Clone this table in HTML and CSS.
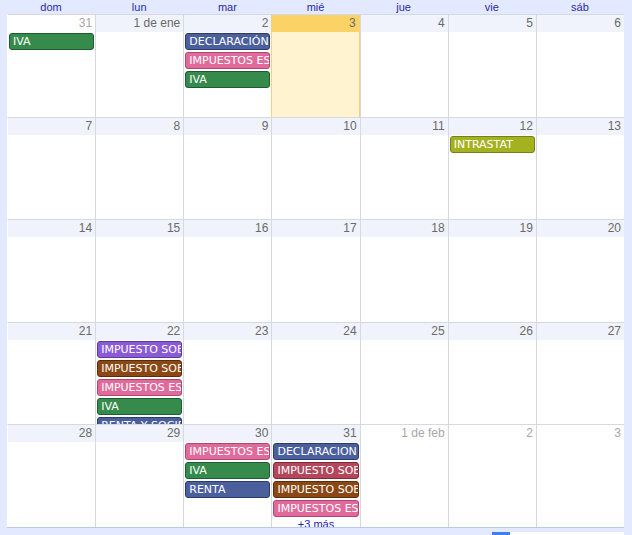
FILE: index.html
```html
<!DOCTYPE html>
<html lang="es">
<head>
<meta charset="utf-8">
<title>Calendario</title>
<link rel="stylesheet" href="styles.css">
</head>
<body>
<div class="cal">
  <div class="days">
    <div>dom</div><div>lun</div><div>mar</div><div>mié</div><div>jue</div><div>vie</div><div>sáb</div>
  </div>
  <div class="month">
    <!-- week 1 -->
    <div class="cell other-head"><div class="num other">31</div><div class="ev green">IVA</div></div>
    <div class="cell"><div class="num">1 de ene</div></div>
    <div class="cell"><div class="num">2</div>
      <div class="ev blue">DECLARACIÓN ANUAL</div>
      <div class="ev pink">IMPUESTOS ESPECIALES</div>
      <div class="ev green">IVA</div>
    </div>
    <div class="cell today"><div class="num">3</div></div>
    <div class="cell"><div class="num">4</div></div>
    <div class="cell"><div class="num">5</div></div>
    <div class="cell"><div class="num">6</div></div>
    <!-- week 2 -->
    <div class="cell"><div class="num">7</div></div>
    <div class="cell"><div class="num">8</div></div>
    <div class="cell"><div class="num">9</div></div>
    <div class="cell"><div class="num">10</div></div>
    <div class="cell"><div class="num">11</div></div>
    <div class="cell"><div class="num">12</div><div class="ev olive">INTRASTAT</div></div>
    <div class="cell"><div class="num">13</div></div>
    <!-- week 3 -->
    <div class="cell"><div class="num">14</div></div>
    <div class="cell"><div class="num">15</div></div>
    <div class="cell"><div class="num">16</div></div>
    <div class="cell"><div class="num">17</div></div>
    <div class="cell"><div class="num">18</div></div>
    <div class="cell"><div class="num">19</div></div>
    <div class="cell"><div class="num">20</div></div>
    <!-- week 4 -->
    <div class="cell"><div class="num">21</div></div>
    <div class="cell"><div class="num">22</div>
      <div class="ev purple">IMPUESTO SOBRE SOCIEDADES</div>
      <div class="ev brown">IMPUESTO SOBRE LA RENTA</div>
      <div class="ev pink">IMPUESTOS ESPECIALES</div>
      <div class="ev green">IVA</div>
      <div class="ev blue">RENTA Y SOCIEDADES</div>
    </div>
    <div class="cell"><div class="num">23</div></div>
    <div class="cell"><div class="num">24</div></div>
    <div class="cell"><div class="num">25</div></div>
    <div class="cell"><div class="num">26</div></div>
    <div class="cell"><div class="num">27</div></div>
    <!-- week 5 -->
    <div class="cell"><div class="num">28</div></div>
    <div class="cell"><div class="num">29</div></div>
    <div class="cell"><div class="num">30</div>
      <div class="ev pink">IMPUESTOS ESPECIALES</div>
      <div class="ev green">IVA</div>
      <div class="ev blue">RENTA</div>
    </div>
    <div class="cell"><div class="num">31</div>
      <div class="ev blue">DECLARACION INFORMATIVA</div>
      <div class="ev red">IMPUESTO SOBRE EL VALOR</div>
      <div class="ev brown">IMPUESTO SOBRE LA RENTA</div>
      <div class="ev pink">IMPUESTOS ESPECIALES</div>
      <div class="more">+3 más</div>
    </div>
    <div class="cell"><div class="num other">1 de feb</div></div>
    <div class="cell"><div class="num other">2</div></div>
    <div class="cell"><div class="num other">3</div></div>
  </div>
  <div class="foot">
    <div class="foot-blue"></div>
    <div class="foot-white"></div>
  </div>
</div>
</body>
</html>
```

FILE: styles.css
```css
html, body {
  margin: 0;
  padding: 0;
  background: #e3e9ff;
  font-family: "Liberation Sans", Arial, sans-serif;
}
.cal {
  width: 632px;
  height: 535px;
  overflow: hidden;
}
.days {
  display: grid;
  grid-template-columns: repeat(7, 1fr);
  margin: 0 8px 0 7px;
  height: 14px;
  font-size: 11px;
  line-height: 14px;
  color: #2a2aa6;
  text-align: center;
}
.month {
  display: grid;
  grid-template-columns: repeat(7, 1fr);
  grid-template-rows: repeat(5, 1fr);
  margin: 0 8px 0 7px;
  height: 513px;
  border-bottom: 1px solid #bcc8ec;
  background: #fff;
}
.cell {
  border-top: 1px solid #d6d9e2;
  border-left: 1px solid #d6d9e2;
  overflow: hidden;
  display: flex;
  flex-direction: column;
  min-width: 0;
  min-height: 0;
  background: #fff;
}
.cell:nth-child(7n+1) {
  border-left-color: #fff;
}
.num {
  flex: none;
  height: 17px;
  line-height: 17px;
  font-size: 12px;
  color: #6a6a6a;
  text-align: right;
  padding-right: 3px;
  background: #f0f3fc;
  margin-bottom: 1px;
  white-space: nowrap;
}
.num.other {
  color: #a8a8a8;
  background: #fff;
}
.today {
  background: #fff4cf;
  border-left-color: #f3d27c;
  border-right: 1px solid #f3d27c;
}
.today .num {
  background: #fad266;
  color: #6a6a6a;
}
.ev {
  flex: none;
  height: 15px;
  line-height: 15px;
  margin: 0 1px 2px 1px;
  padding-left: 3px;
  border: 1px solid;
  border-radius: 3px;
  font-family: "DejaVu Sans", Verdana, sans-serif;
  font-size: 11px;
  color: #fff;
  white-space: nowrap;
  overflow: hidden;
}
.green { background: #368a4c; border-color: #1f5a30; }
.blue { background: #4b5f9d; border-color: #2c3b6e; }
.pink { background: #e06b9b; border-color: #b04676; }
.purple { background: #8b5bd6; border-color: #5d3aa0; }
.brown { background: #8c4814; border-color: #5a2c08; }
.olive { background: #a4b21f; border-color: #76801a; }
.red { background: #b3475c; border-color: #7d2a3c; }
.more {
  flex: none;
  text-align: center;
  font-size: 11px;
  line-height: 12px;
  margin-top: -1px;
  color: #2222bb;
}
.foot {
  display: flex;
  margin-top: 4px;
  height: 3px;
  padding-left: 492px;
}
.foot-blue {
  width: 18px;
  background: #3d7ff0;
}
.foot-white {
  width: 114px;
  background: #fff;
}
```
